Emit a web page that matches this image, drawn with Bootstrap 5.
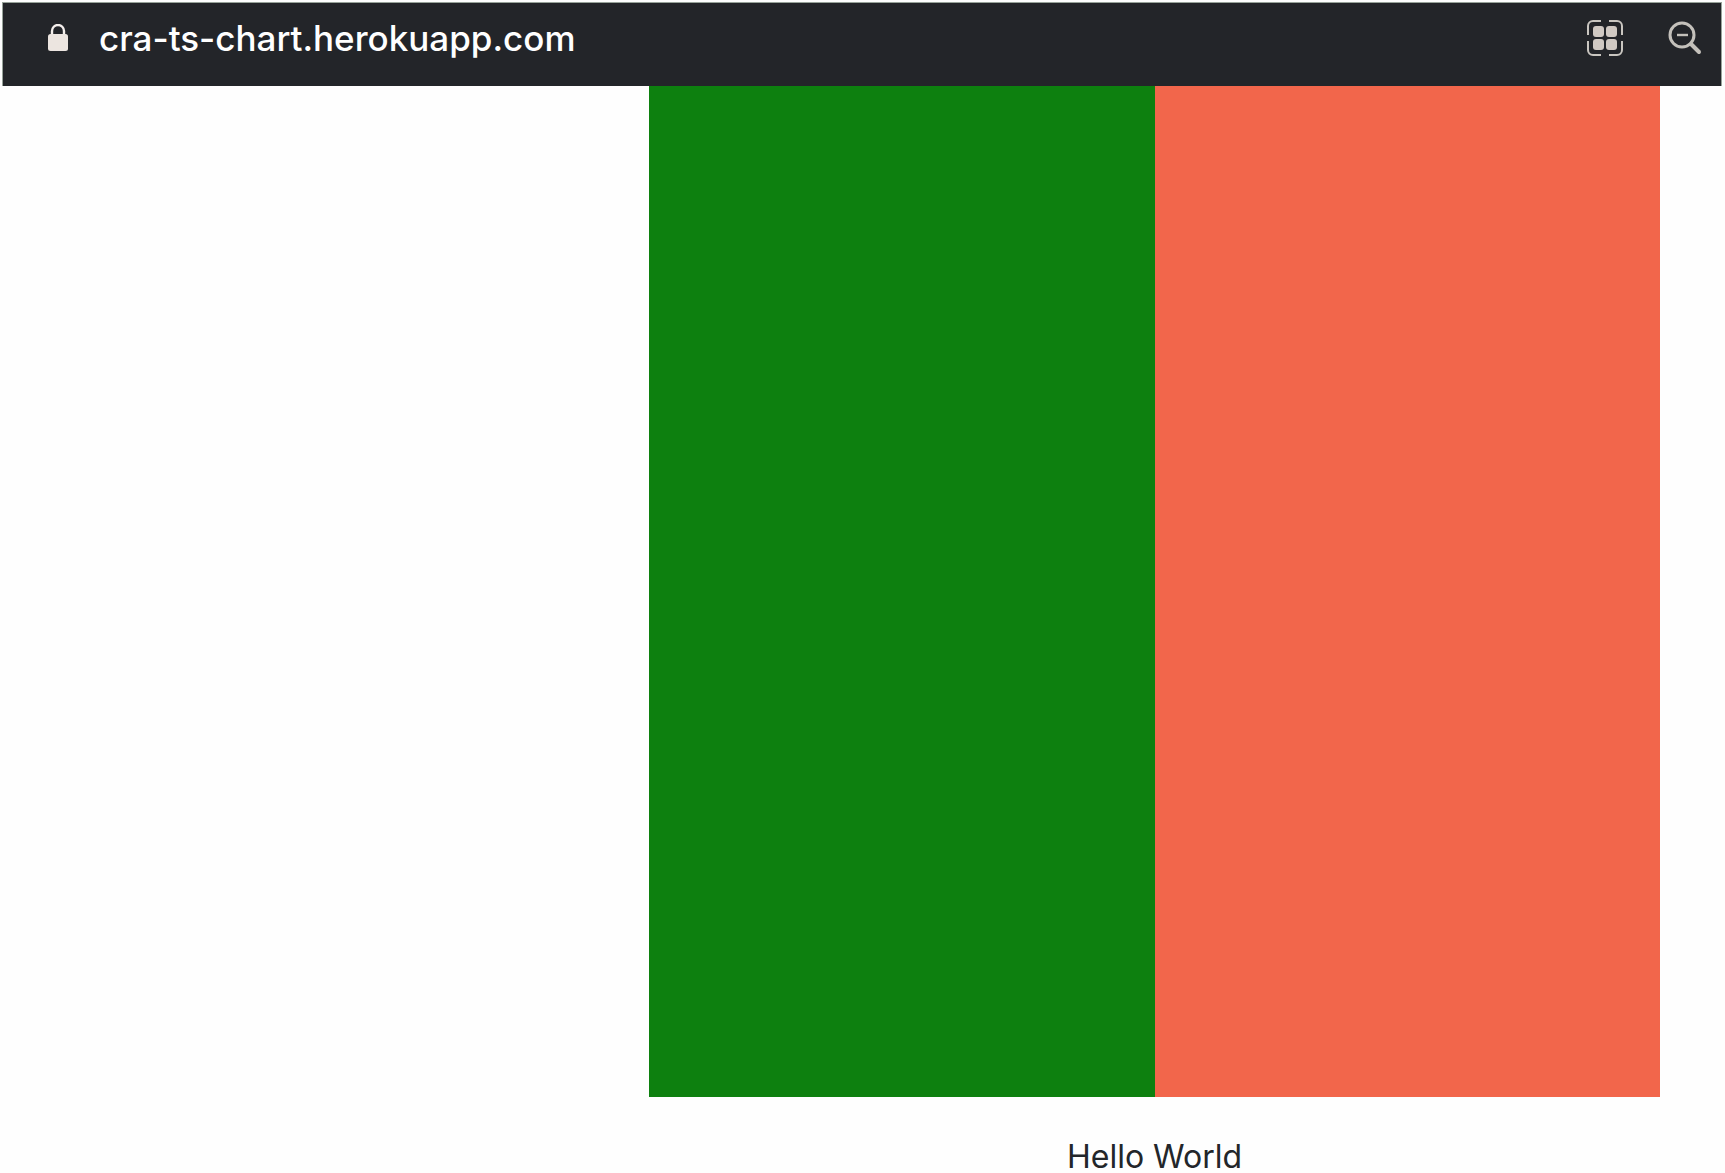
<!DOCTYPE html>
<html lang="en">
<head>
<meta charset="utf-8">
<meta name="viewport" content="width=device-width, initial-scale=1">
<title>cra-ts-chart</title>
<link href="https://cdn.jsdelivr.net/npm/bootstrap@5.3.0/dist/css/bootstrap.min.css" rel="stylesheet">
<style>
body { font-family: Inter, "Liberation Sans", sans-serif; background: #fefefe; color: #23262a; }
.address-bar { background: #232529; height: 84px; margin: 2px 3px 0 2px; padding: 0 19px 14px 44px; border: 1px solid #98a39a; border-bottom: 0; }
.site-link { color: #fff; font-size: 35px; line-height: 40px; font-weight: 500; margin-left: 30px; }
.bar-icon { color: #d8d0ca; line-height: 0; }
.bar-tools { gap: 45px; }
.chart-area { padding-left: 649px; padding-right: 65px; }
.chart-plot { aspect-ratio: 1; }
.bar-green { background: #0d800f; }
.bar-coral { background: #f2664b; }
.chart-label { font-size: 32px; line-height: 32px; padding-top: 44px; }
</style>
<script src="https://cdn.jsdelivr.net/npm/bootstrap@5.3.0/dist/js/bootstrap.bundle.min.js" defer></script>
</head>
<body>
<header class="address-bar d-flex align-items-center">
  <svg class="flex-shrink-0" width="22" height="28" viewBox="0 0 22 28" aria-hidden="true">
    <path d="M5 11V7a6 6 0 0 1 12 0v4" fill="none" stroke="#f4efec" stroke-width="2.4"/>
    <rect x="1" y="10" width="20" height="17" rx="2.5" fill="#ece5e0"/>
  </svg>
  <a class="site-link text-decoration-none" href="#">cra-ts-chart.herokuapp.com</a>
  <div class="bar-tools d-flex align-items-center ms-auto">
    <button type="button" class="bar-icon btn p-0 border-0" aria-label="Apps">
      <svg width="36" height="36" viewBox="0 0 36 36">
        <path d="M1 15V6a5 5 0 0 1 5-5h8M22 1h8a5 5 0 0 1 5 5v9M35 21v9a5 5 0 0 1-5 5h-8M14 35H6a5 5 0 0 1-5-5v-9" fill="none" stroke="#c9c6c0" stroke-width="2"/>
        <g fill="#d0c9c3"><rect x="6" y="6" width="11" height="11" rx="3"/><rect x="19" y="6" width="11" height="11" rx="3"/><rect x="6" y="19" width="11" height="11" rx="3"/><rect x="19" y="19" width="11" height="11" rx="3"/></g>
      </svg>
    </button>
    <button type="button" class="bar-icon btn p-0 border-0" aria-label="Zoom out">
      <svg width="34" height="34" viewBox="0 0 34 34" fill="none" stroke="#c4c1bb">
        <circle cx="14" cy="14" r="12" stroke-width="3"/>
        <path d="M9 14h11" stroke-width="2.4"/>
        <path d="M23 23l8 8" stroke-width="4" stroke-linecap="round"/>
      </svg>
    </button>
  </div>
</header>
<main class="chart-area">
  <div class="chart-plot row g-0" role="img" aria-label="Two equal bars">
    <div class="col-6 bar-green"></div>
    <div class="col-6 bar-coral"></div>
  </div>
  <div class="chart-label text-center">Hello World</div>
</main>
</body>
</html>
